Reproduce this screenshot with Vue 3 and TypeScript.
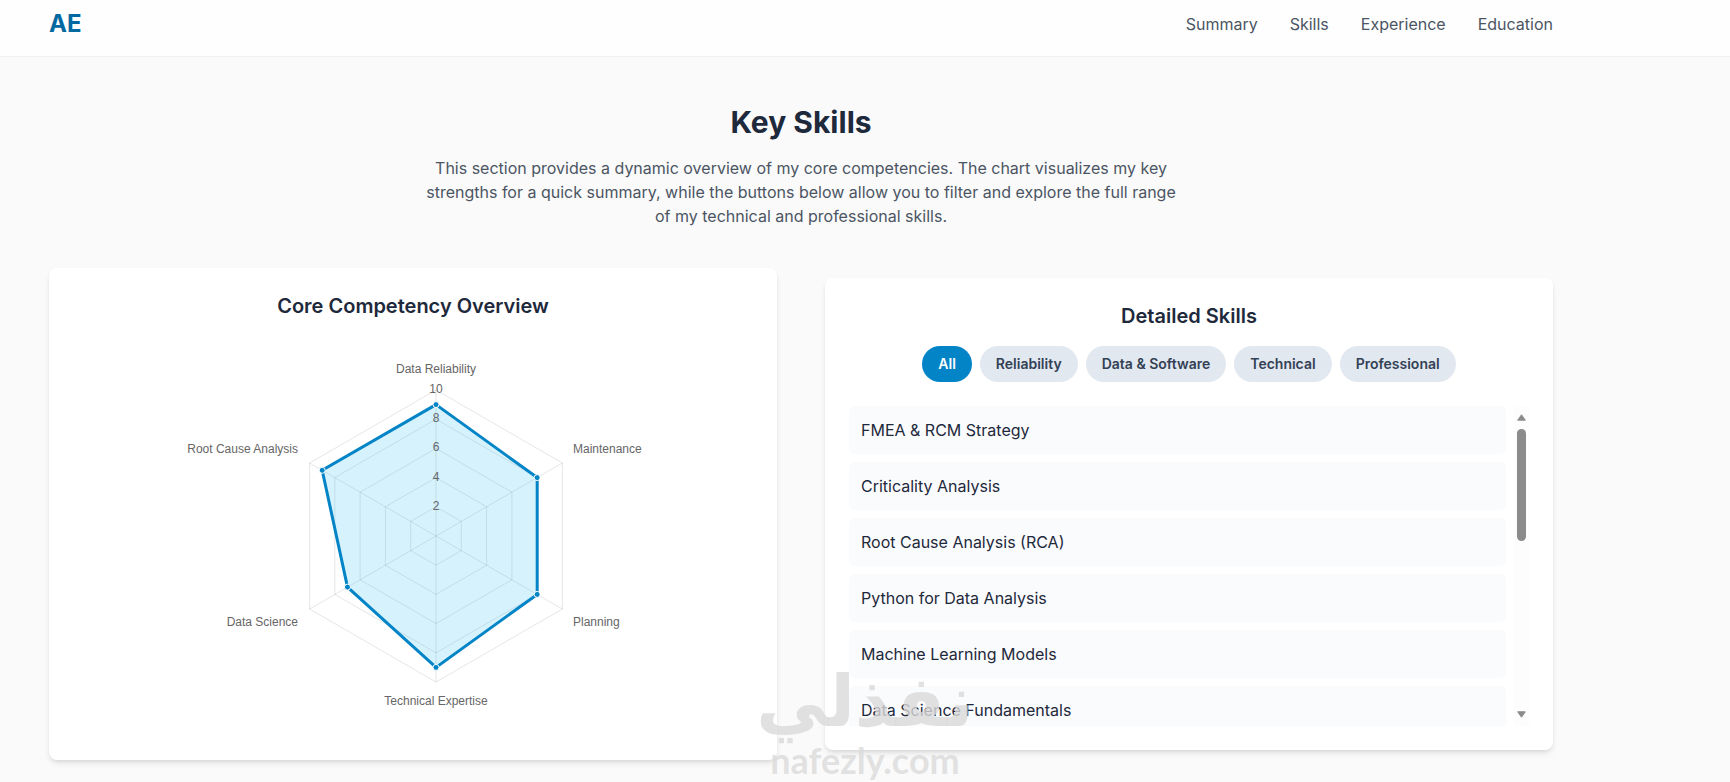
<script setup lang="ts">
import { computed, ref } from 'vue'

type Category = 'Reliability' | 'Data & Software' | 'Technical' | 'Professional'
type Filter = 'All' | Category

interface Skill {
  name: string
  category: Category
}

interface Axis {
  label: string
  value: number
  x: number
  y: number
  anchor: 'start' | 'middle' | 'end'
}

const links = ['Summary', 'Skills', 'Experience', 'Education']
const filters: Filter[] = ['All', 'Reliability', 'Data & Software', 'Technical', 'Professional']

const skills: Skill[] = [
  { name: 'FMEA & RCM Strategy', category: 'Reliability' },
  { name: 'Criticality Analysis', category: 'Reliability' },
  { name: 'Root Cause Analysis (RCA)', category: 'Reliability' },
  { name: 'Python for Data Analysis', category: 'Data & Software' },
  { name: 'Machine Learning Models', category: 'Data & Software' },
  { name: 'Data Science Fundamentals', category: 'Data & Software' },
]

const active = ref<Filter>('All')
const visibleSkills = computed(() =>
  active.value === 'All' ? skills : skills.filter((s) => s.category === active.value),
)

// Radar chart geometry
const cx = 363
const cy = 200
const radius = 146
const max = 10
const ticks = [2, 4, 6, 8, 10]

const axes: Axis[] = [
  { label: 'Data Reliability', value: 9, x: 363, y: 37, anchor: 'middle' },
  { label: 'Maintenance', value: 8, x: 500, y: 117, anchor: 'start' },
  { label: 'Planning', value: 8, x: 500, y: 290, anchor: 'start' },
  { label: 'Technical Expertise', value: 9, x: 363, y: 369, anchor: 'middle' },
  { label: 'Data Science', value: 7, x: 225, y: 290, anchor: 'end' },
  { label: 'Root Cause Analysis', value: 9, x: 225, y: 117, anchor: 'end' },
]

function point(index: number, value: number) {
  const angle = (Math.PI * 2 * index) / axes.length - Math.PI / 2
  const r = (radius * value) / max
  return { x: cx + r * Math.cos(angle), y: cy + r * Math.sin(angle) }
}

function polygon(values: number[]) {
  return values
    .map((v, i) => point(i, v))
    .map((p) => `${p.x.toFixed(1)},${p.y.toFixed(1)}`)
    .join(' ')
}

const rings = ticks.map((t) => polygon(axes.map(() => t)))
const spokes = axes.map((_, i) => point(i, max))
const dots = axes.map((a, i) => point(i, a.value))
const shape = polygon(axes.map((a) => a.value))
</script>

<template>
  <div class="page">
    <header class="header">
      <a class="brand" href="#top">AE</a>
      <nav class="nav" aria-label="Main">
        <a v-for="link in links" :key="link" :href="'#' + link.toLowerCase()">{{ link }}</a>
      </nav>
    </header>

    <main id="skills" class="main">
      <div class="intro">
        <h2>Key Skills</h2>
        <p>
          This section provides a dynamic overview of my core competencies. The chart visualizes my
          key strengths for a quick summary, while the buttons below allow you to filter and explore
          the full range of my technical and professional skills.
        </p>
      </div>

      <div class="cards">
        <section class="card">
          <h3>Core Competency Overview</h3>
          <svg class="chart" viewBox="0 0 680 400" role="img" aria-label="Core Competency Overview">
            <g class="grid">
              <polygon v-for="(ring, i) in rings" :key="i" :points="ring" />
              <line v-for="(s, i) in spokes" :key="i" :x1="cx" :y1="cy" :x2="s.x" :y2="s.y" />
            </g>
            <polygon class="shape" :points="shape" />
            <circle v-for="(d, i) in dots" :key="i" class="dot" :cx="d.x" :cy="d.y" r="3" />
            <text
              v-for="t in ticks"
              :key="t"
              class="label"
              :x="cx"
              :y="cy - (radius * t) / max + 3"
              text-anchor="middle"
            >{{ t }}</text>
            <text
              v-for="a in axes"
              :key="a.label"
              class="label"
              :x="a.x"
              :y="a.y"
              :text-anchor="a.anchor"
            >{{ a.label }}</text>
          </svg>
        </section>

        <section class="card">
          <h3>Detailed Skills</h3>
          <div class="filters">
            <button
              v-for="f in filters"
              :key="f"
              type="button"
              :class="{ active: active === f }"
              :aria-pressed="active === f"
              @click="active = f"
            >{{ f }}</button>
          </div>
          <div class="scroller">
            <ul class="list">
              <li v-for="s in visibleSkills" :key="s.name">{{ s.name }}</li>
            </ul>
            <div class="scrollbar" aria-hidden="true">
              <svg width="9" height="7" viewBox="0 0 9 7">
                <path d="M4.5 .8 L8.3 6.2 H.7 Z" />
              </svg>
              <div class="track"><div class="thumb"></div></div>
              <svg width="9" height="7" viewBox="0 0 9 7">
                <path d="M4.5 6.2 L.7 .8 H8.3 Z" />
              </svg>
            </div>
          </div>
        </section>
      </div>
    </main>

    <div class="watermark">
      <span class="watermark-ar" lang="ar" dir="rtl">نفذلي</span>
      <span class="watermark-en">nafezly.com</span>
    </div>
  </div>
</template>

<style>
body {
  margin: 0;
  background: #fafafa;
}
</style>

<style scoped>
.page {
  position: relative;
  min-height: 100vh;
  overflow: hidden;
  background: #fafafa;
  color: #1e293b;
  font-family: Inter, 'Liberation Sans', sans-serif;
  font-size: 16px;
  line-height: 24px;
  box-sizing: border-box;
}

.header {
  display: flex;
  align-items: center;
  justify-content: space-between;
  padding: 8px 177px 16px 49px;
  background: #fefefe;
  border-bottom: 1px solid #f0f0f0;
}

.brand {
  color: #0369a1;
  font-size: 24px;
  font-weight: 700;
  line-height: 32px;
  text-decoration: none;
}

.nav {
  display: flex;
  gap: 32px;
}

.nav a {
  color: #4b5563;
  text-decoration: none;
}

.main {
  padding: 47px 177px 22px 49px;
}

.intro {
  max-width: 768px;
  margin: 0 auto 40px;
  text-align: center;
}

h2 {
  margin: 0 0 16px;
  font-size: 30px;
  font-weight: 700;
  line-height: 36px;
}

p {
  margin: 0;
  color: #4b5563;
}

.cards {
  display: grid;
  grid-template-columns: 1fr 1fr;
  gap: 48px;
  align-items: center;
}

.card {
  padding: 24px;
  border-radius: 8px;
  background: #fff;
  box-shadow: 0 4px 6px -1px rgba(0, 0, 0, 0.1), 0 2px 4px -2px rgba(0, 0, 0, 0.1);
}

h3 {
  margin: 0 0 16px;
  font-size: 20px;
  font-weight: 600;
  line-height: 28px;
  text-align: center;
}

.chart {
  display: block;
  width: 100%;
  height: 400px;
}

.grid {
  fill: none;
  stroke: rgba(0, 0, 0, 0.1);
  stroke-width: 1;
}

.shape {
  fill: rgba(46, 190, 245, 0.2);
  stroke: #0284c7;
  stroke-width: 3;
}

.dot {
  fill: #0284c7;
  stroke: #fff;
  stroke-width: 1;
}

.label {
  fill: #666;
  font-family: 'Liberation Sans', Arial, sans-serif;
  font-size: 12px;
}

.filters {
  display: flex;
  flex-wrap: wrap;
  justify-content: center;
  gap: 8px;
  margin-bottom: 24px;
}

.filters button {
  padding: 8px 16px;
  border: 0;
  border-radius: 18px;
  background: #e2e8f0;
  color: #334155;
  font: 600 14px/20px Inter, 'Liberation Sans', sans-serif;
  cursor: pointer;
}

.filters button.active {
  background: #0284c7;
  color: #fff;
}

.scroller {
  display: flex;
  gap: 8px;
  height: 320px;
}

.list {
  flex: 1;
  display: flex;
  flex-direction: column;
  gap: 8px;
  margin: 0;
  padding: 0;
  overflow-y: auto;
  list-style: none;
  scrollbar-width: none;
}

.list li {
  flex: none;
  padding: 12px;
  border-radius: 6px;
  background: #fafbfd;
}

.scrollbar {
  display: flex;
  flex-direction: column;
  align-items: center;
  gap: 8px;
  width: 15px;
  padding: 8px 0;
  box-sizing: border-box;
  background: #fdfdfd;
}

.scrollbar svg {
  display: block;
  fill: #8b8b8b;
  stroke: #8b8b8b;
  stroke-width: 1;
  stroke-linejoin: round;
}

.track {
  flex: 1;
  width: 9px;
}

.thumb {
  height: 41%;
  border-radius: 5px;
  background: #8b8b8b;
}

.watermark {
  position: absolute;
  bottom: 0;
  left: 50%;
  display: flex;
  flex-direction: column;
  align-items: center;
  transform: translateX(-50%);
  color: rgba(218, 218, 218, 0.8);
  font-family: 'DejaVu Sans', sans-serif;
  font-weight: 700;
  pointer-events: none;
}

.watermark-ar {
  font-size: 71px;
  line-height: 72px;
}

.watermark-en {
  font-family: Lato, 'DejaVu Sans', sans-serif;
  font-size: 36px;
  font-weight: 700;
  line-height: 44px;
}
</style>
